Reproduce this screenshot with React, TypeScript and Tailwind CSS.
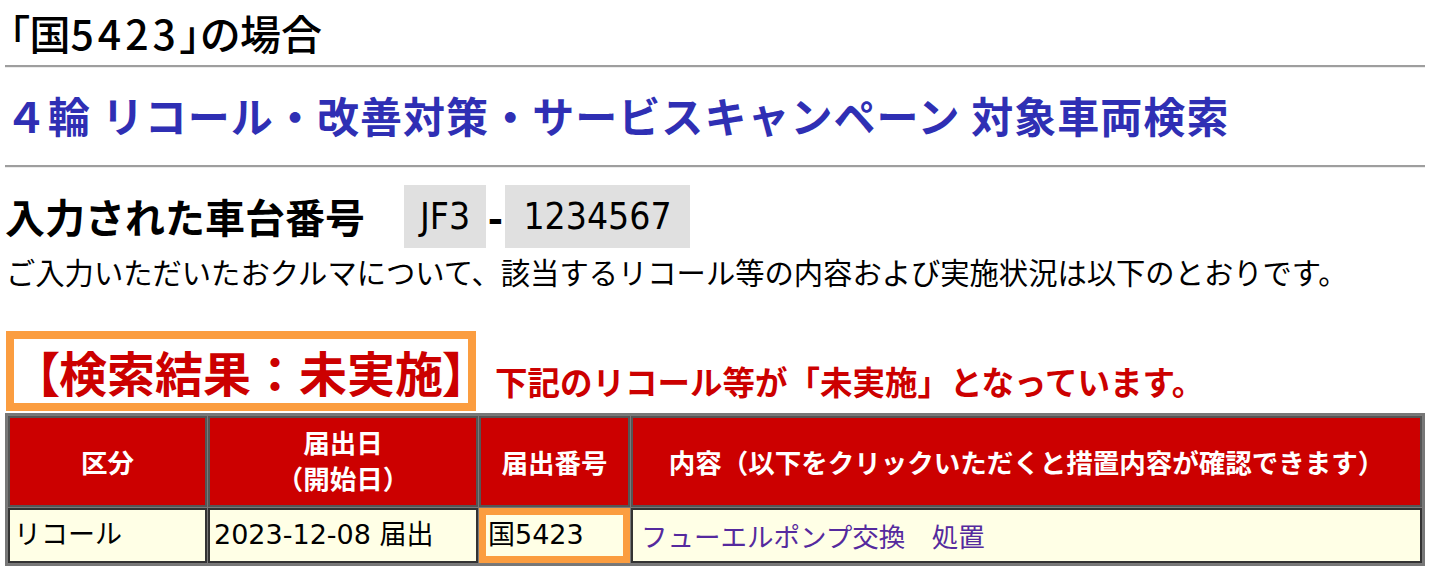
const jp = "font-['Noto_Sans_CJK_JP','Noto_Sans',sans-serif]";
const cell = "font-['DejaVu_Sans','Noto_Sans_CJK_JP',sans-serif]";
const narrow = "font-['DejaVu_Sans_Condensed','DejaVu_Sans',sans-serif] [font-stretch:condensed]";

function Rule() {
  return <div className="h-[3px] border-t-2 border-b border-t-[#9e9e9e] border-b-[#ececec]" />;
}

export default function App() {
  return (
    <div className={`${jp} bg-white text-black px-[5px] min-h-screen`}>
      <h1 className="mt-[6px] pl-[4px] text-[41px] leading-[52px] font-medium [font-feature-settings:'palt']">
        「国<span className="tracking-[4px]">5423</span>」の場合
      </h1>
      <div className="mt-[7px]">
        <Rule />
      </div>

      <h2 className="mt-[19px] text-[42px] leading-[56px] font-bold text-[#2f2fb4] tracking-[1.05px]">
        ４輪 リコール・改善対策・サービスキャンペーン 対象車両検索
      </h2>
      <div className="mt-[22px]">
        <Rule />
      </div>

      <div className="mt-[17px] flex items-center">
        <span className="text-[40px] font-bold leading-[63px]">入力された車台番号</span>
        <span className={`ml-[39px] h-[63px] w-[82px] bg-[#e0e0e0] flex items-center justify-center text-[37px] ${narrow}`}>
          JF3
        </span>
        <span className="w-[19px] text-center text-[40px] font-black leading-[63px]">-</span>
        <span className={`h-[63px] w-[185px] bg-[#e0e0e0] flex items-center justify-center text-[37px] ${narrow}`}>
          1234567
        </span>
      </div>

      <p className="mt-[5px] pl-[1px] text-[29.3px] leading-[36px]">
        ご入力いただいたおクルマについて、該当するリコール等の内容および実施状況は以下のとおりです。
      </p>

      <div className="mt-[42px] flex items-end">
        <div className="ml-[1px] h-[80px] w-[470px] border-[8px] border-[#fb9d40] flex items-center pl-[21px]">
          <span className="text-[48px] font-bold text-[#cc0000] leading-[64px] whitespace-nowrap [font-feature-settings:'palt']">
            【検索結果<span className="[font-feature-settings:normal]">：</span>未実施】
          </span>
        </div>
        <span className="ml-[19px] mb-[10px] text-[32.5px] font-bold text-[#cc0000] leading-[40px] whitespace-nowrap">
          下記のリコール等が「未実施」となっています。
        </span>
      </div>

      <table className="mt-[2px] w-full table-fixed border-separate border-spacing-[1px] border-2 border-[#777777] bg-[#7a7a7a]">
        <colgroup>
          <col className="w-[199px]" />
          <col className="w-[270px]" />
          <col className="w-[151px]" />
          <col />
        </colgroup>
        <thead>
          <tr className="h-[91px]">
            <th className="border-2 border-[#555555] bg-[#cc0000] text-white text-[26.5px] font-bold">区分</th>
            <th className="border-2 border-[#555555] bg-[#cc0000] text-white text-[26.5px] font-bold pb-[4px]">
              <div className="leading-[36px]">届出日</div>
              <div className="leading-[36px]">（開始日）</div>
            </th>
            <th className="border-2 border-[#555555] bg-[#cc0000] text-white text-[26.5px] font-bold">届出番号</th>
            <th className="border-2 border-[#555555] bg-[#cc0000] text-white text-[26.5px] font-bold">
              内容（以下をクリックいただくと措置内容が確認できます）
            </th>
          </tr>
        </thead>
        <tbody>
          <tr className="h-[55px]">
            <td className={`border-2 border-[#333333] bg-[#ffffe6] px-[4px] text-[27px] ${cell}`}>リコール</td>
            <td className={`border-2 border-[#333333] bg-[#ffffe6] px-[4px] text-[27px] ${cell}`}>2023-12-08 届出</td>
            <td className={`border-[7px] border-[#fb9d40] bg-[#ffffe6] px-[2px] text-[27px] ${cell}`}>国5423</td>
            <td className={`border-2 border-[#333333] bg-[#ffffe6] px-[8px] text-[26.5px] ${jp}`}>
              <a className="text-[#552a9e] cursor-pointer">フューエルポンプ交換　処置</a>
            </td>
          </tr>
        </tbody>
      </table>
    </div>
  );
}
